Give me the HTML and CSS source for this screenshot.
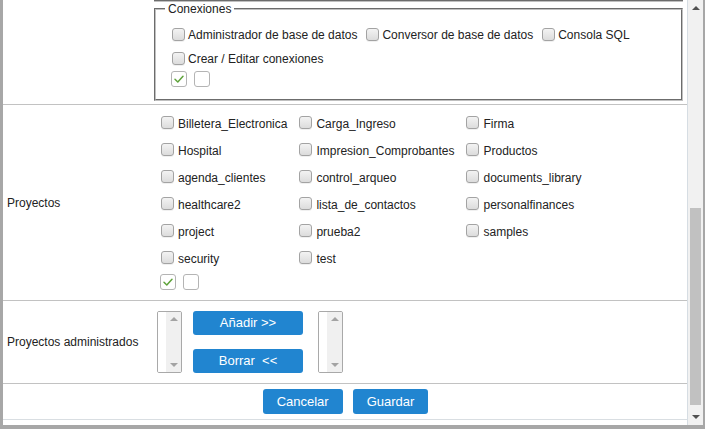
FILE: index.html
```html
<!DOCTYPE html>
<html lang="es">
<head>
<meta charset="utf-8">
<title>Permisos</title>
<link rel="stylesheet" href="styles.css">
</head>
<body>
<div class="window">
  <main class="content">
    <section class="form-row row-conn">
      <div class="row-label"></div>
      <div class="row-field">
        <div class="prev-edge"></div>
        <fieldset class="group">
          <legend>Conexiones</legend>
          <div class="inline-options">
            <label class="opt"><input type="checkbox" class="cb"><span>Administrador de base de datos</span></label>
            <label class="opt"><input type="checkbox" class="cb"><span>Conversor de base de datos</span></label>
            <label class="opt"><input type="checkbox" class="cb"><span>Consola SQL</span></label>
            <label class="opt"><input type="checkbox" class="cb"><span>Crear / Editar conexiones</span></label>
          </div>
          <div class="toggle-all conn-toggle">
            <span class="toggle-box"><svg width="14" height="14" viewBox="0 0 14 14"><path d="M3 7.3 L5.8 10 L11 4.2" fill="none" stroke="#5fa33b" stroke-width="1.5" stroke-linecap="round" stroke-linejoin="round"/></svg></span>
            <span class="toggle-box"></span>
          </div>
        </fieldset>
      </div>
    </section>

    <section class="form-row row-projects">
      <div class="row-label">Proyectos</div>
      <div class="row-field">
        <div class="project-grid">
          <label class="proj-opt"><input type="checkbox" class="cb"><span>Billetera_Electronica</span></label>
          <label class="proj-opt"><input type="checkbox" class="cb"><span>Carga_Ingreso</span></label>
          <label class="proj-opt"><input type="checkbox" class="cb"><span>Firma</span></label>
          <label class="proj-opt"><input type="checkbox" class="cb"><span>Hospital</span></label>
          <label class="proj-opt"><input type="checkbox" class="cb"><span>Impresion_Comprobantes</span></label>
          <label class="proj-opt"><input type="checkbox" class="cb"><span>Productos</span></label>
          <label class="proj-opt"><input type="checkbox" class="cb"><span>agenda_clientes</span></label>
          <label class="proj-opt"><input type="checkbox" class="cb"><span>control_arqueo</span></label>
          <label class="proj-opt"><input type="checkbox" class="cb"><span>documents_library</span></label>
          <label class="proj-opt"><input type="checkbox" class="cb"><span>healthcare2</span></label>
          <label class="proj-opt"><input type="checkbox" class="cb"><span>lista_de_contactos</span></label>
          <label class="proj-opt"><input type="checkbox" class="cb"><span>personalfinances</span></label>
          <label class="proj-opt"><input type="checkbox" class="cb"><span>project</span></label>
          <label class="proj-opt"><input type="checkbox" class="cb"><span>prueba2</span></label>
          <label class="proj-opt"><input type="checkbox" class="cb"><span>samples</span></label>
          <label class="proj-opt"><input type="checkbox" class="cb"><span>security</span></label>
          <label class="proj-opt"><input type="checkbox" class="cb"><span>test</span></label>
        </div>
        <div class="toggle-all proj-toggle">
          <span class="toggle-box"><svg width="14" height="14" viewBox="0 0 14 14"><path d="M3 7.3 L5.8 10 L11 4.2" fill="none" stroke="#5fa33b" stroke-width="1.5" stroke-linecap="round" stroke-linejoin="round"/></svg></span>
          <span class="toggle-box"></span>
        </div>
      </div>
    </section>

    <section class="form-row row-admin">
      <div class="row-label">Proyectos administrados</div>
      <div class="row-field admin-field">
        <div class="listbox">
          <div class="lb-body"></div>
          <div class="lb-scroll"><span class="mini-up"></span><span class="mini-down"></span></div>
        </div>
        <div class="transfer">
          <button class="btn btn-transfer" type="button">Añadir &gt;&gt;</button>
          <button class="btn btn-transfer" type="button">Borrar &nbsp;&lt;&lt;</button>
        </div>
        <div class="listbox listbox-right">
          <div class="lb-body"></div>
          <div class="lb-scroll"><span class="mini-up"></span><span class="mini-down"></span></div>
        </div>
      </div>
    </section>

    <section class="actions">
      <button class="btn" type="button">Cancelar</button>
      <button class="btn" type="button">Guardar</button>
    </section>
  </main>

  <div class="scrollbar">
    <div class="sb-button"><span class="arrow-up"></span></div>
    <div class="sb-track"><div class="sb-thumb"></div></div>
    <div class="sb-button"><span class="arrow-down"></span></div>
  </div>
</div>
</body>
</html>
```

FILE: styles.css
```css
* { box-sizing: border-box; }

html, body {
  margin: 0;
  padding: 0;
  background: #ffffff;
}

body {
  font-family: "Liberation Sans", Arial, sans-serif;
  font-size: 12px;
  color: #222222;
}

.window {
  width: 705px;
  height: 429px;
  display: flex;
  overflow: hidden;
  border-left: 3px solid #a7a7a7;
  border-right: 2px solid #a7a7a7;
  border-bottom: 4px solid #a7a7a7;
  background: #ffffff;
}

.content {
  width: 684px;
  height: 425px;
  overflow: hidden;
}

/* rows */
.form-row {
  display: grid;
  grid-template-columns: 151px 1fr;
  border-bottom: 1px solid #c2c2c2;
}

.row-label {
  align-self: center;
  padding-left: 4px;
  line-height: 14px;
}

/* connections */
.row-conn .row-field {
  padding-bottom: 3px;
}

.prev-edge {
  height: 2px;
  margin-right: 4px;
  border-bottom: 2px groove rgb(192, 192, 192);
}

.group {
  margin: 0 4px 0 0;
  padding: 7px 9px 12px 9px;
  border: 2px groove rgb(192, 192, 192);
  min-width: 0;
}

.group legend {
  padding: 0 3px;
  font-size: 12px;
  line-height: 14px;
}

.inline-options {
  display: flex;
  flex-wrap: wrap;
  margin-left: 3px;
}

.opt {
  display: flex;
  align-items: center;
  height: 24px;
  margin-right: 5px;
  white-space: nowrap;
}

.opt .cb {
  margin: 0 3px 1px 4px;
}

/* checkbox look */
.cb {
  appearance: none;
  -webkit-appearance: none;
  width: 13px;
  height: 13px;
  flex: none;
  border: 1px solid #a3a3a3;
  border-radius: 3px;
  background: linear-gradient(#f3f3f3, #dcdcdc);
  box-shadow: 0 1px 0 rgba(0, 0, 0, 0.06);
}

.toggle-all {
  display: flex;
  gap: 7px;
}

.conn-toggle {
  margin-left: 6px;
}

.toggle-box {
  width: 16px;
  height: 16px;
  border: 1px solid #b4b4b4;
  border-radius: 3px;
  background: #ffffff;
  display: flex;
  align-items: center;
  justify-content: center;
}

/* projects */
.row-projects .row-field {
  padding: 5px 0 10px 0;
}

.project-grid {
  display: grid;
  grid-template-columns: repeat(3, auto);
  justify-content: start;
  column-gap: 12px;
  grid-auto-rows: 27px;
  margin-left: 7px;
}

.proj-opt {
  display: flex;
  align-items: center;
  white-space: nowrap;
}

.proj-opt .cb {
  margin: 0 4px 3px 0;
}

.proj-toggle {
  margin: 2px 0 0 6px;
}

/* administered projects */
.admin-field {
  display: flex;
  align-items: flex-start;
  padding: 10px 0;
}

.listbox {
  width: 25px;
  height: 62px;
  margin-left: 3px;
  border: 1px solid #a9a9a9;
  border-radius: 2px;
  display: flex;
  overflow: hidden;
}

.listbox-right {
  margin-left: 15px;
}

.lb-body {
  width: 8px;
  background: #ffffff;
}

.lb-scroll {
  flex: 1;
  background: #f0f0f0;
  display: flex;
  flex-direction: column;
  justify-content: space-between;
  align-items: center;
  padding: 5px 0;
}

.mini-up {
  width: 0;
  height: 0;
  border-left: 4px solid transparent;
  border-right: 4px solid transparent;
  border-bottom: 4px solid #a3a3a3;
}

.mini-down {
  width: 0;
  height: 0;
  border-left: 4px solid transparent;
  border-right: 4px solid transparent;
  border-top: 4px solid #a3a3a3;
}

.transfer {
  width: 110px;
  height: 62px;
  margin-left: 11px;
  display: flex;
  flex-direction: column;
  justify-content: space-between;
}

.btn {
  font-family: "Liberation Sans", Arial, sans-serif;
  font-size: 13px;
  color: #ffffff;
  background: #2185d0;
  border: 0;
  border-radius: 3px;
  height: 25px;
  padding: 0 14px;
  line-height: 25px;
  white-space: pre;
}

.btn-transfer {
  width: 110px;
  height: 24px;
  line-height: 24px;
  padding: 0;
}

/* footer actions */
.actions {
  display: flex;
  justify-content: center;
  gap: 10px;
  padding: 5px 0 5px 1px;
  border-bottom: 1px solid #d9dee2;
}

/* scrollbar */
.scrollbar {
  width: 16px;
  height: 425px;
  border-left: 1px solid #d6dde3;
  background: #f1f1f1;
  display: flex;
  flex-direction: column;
}

.sb-button {
  height: 16px;
  display: flex;
  align-items: center;
  justify-content: center;
}

.sb-track {
  flex: 1;
  padding: 0 2px;
}

.sb-thumb {
  margin-top: 192px;
  height: 197px;
  background: #c1c1c1;
}

.arrow-up {
  width: 0;
  height: 0;
  border-left: 4px solid transparent;
  border-right: 4px solid transparent;
  border-bottom: 4px solid #505050;
}

.arrow-down {
  width: 0;
  height: 0;
  border-left: 4px solid transparent;
  border-right: 4px solid transparent;
  border-top: 4px solid #505050;
}
```
